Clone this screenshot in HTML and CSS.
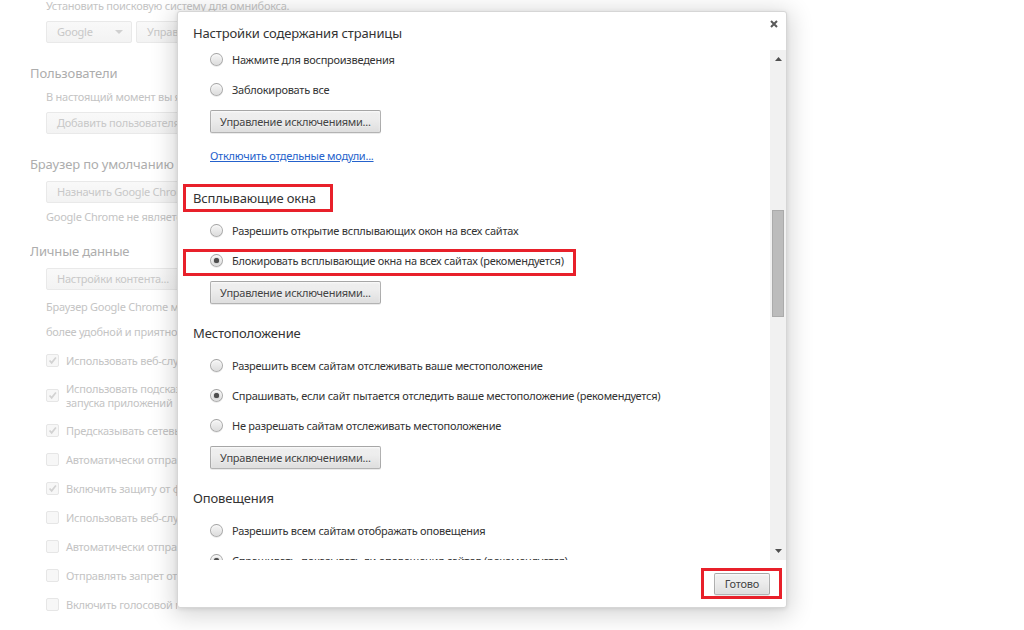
FILE: index.html
```html
<!DOCTYPE html>
<html lang="ru">
<head>
<meta charset="utf-8">
<title>Настройки содержания страницы</title>
<link rel="stylesheet" href="styles.css">
</head>
<body>

<!-- страница настроек под диалогом -->
<div class="page">
  <p class="bg-note first">Установить поисковую систему для омнибокса.</p>
  <div class="bg-clip">
    <div class="bg-row">
      <span class="bg-select">Google <i class="caret"></i></span>
      <span class="bg-btn">Управление поисковыми системами...</span>
    </div>

    <h3 class="bg-head">Пользователи</h3>
    <p class="bg-note">В настоящий момент вы являетесь единственным пользователем Google Chrome.</p>
    <div class="bg-row"><span class="bg-btn">Добавить пользователя...</span></div>

    <h3 class="bg-head">Браузер по умолчанию</h3>
    <div class="bg-row"><span class="bg-btn">Назначить Google Chrome браузером по умолчанию</span></div>
    <p class="bg-note">Google Chrome не является браузером по умолчанию.</p>

    <h3 class="bg-head after-note">Личные данные</h3>
    <div class="bg-row"><span class="bg-btn">Настройки контента...</span><span class="bg-btn">Очистить историю...</span></div>
    <p class="bg-note wide">Браузер Google Chrome может использовать веб-службы, чтобы сделать работу в Интернете</p>
    <p class="bg-note wide">более удобной и приятной. Эти службы можно отключить.</p>

    <div class="bg-checks">
      <div class="bg-check"><span class="box on"><svg viewBox="0 0 13 13"><path d="M3 6.5l2.5 2.8L10.5 3"/></svg></span>Использовать веб-службу для разрешения проблем, связанных с навигацией</div>
      <div class="bg-check two"><span class="box on"><svg viewBox="0 0 13 13"><path d="M3 6.5l2.5 2.8L10.5 3"/></svg></span><span>Использовать подсказки для завершения поисковых запросов и URL<br>запуска приложений</span></div>
      <div class="bg-check"><span class="box on"><svg viewBox="0 0 13 13"><path d="M3 6.5l2.5 2.8L10.5 3"/></svg></span>Предсказывать сетевые действия для ускорения загрузки страниц</div>
      <div class="bg-check"><span class="box"></span>Автоматически отправлять в Google информацию о возможных инцидентах</div>
      <div class="bg-check"><span class="box on"><svg viewBox="0 0 13 13"><path d="M3 6.5l2.5 2.8L10.5 3"/></svg></span>Включить защиту от фишинга и вредоносного ПО</div>
      <div class="bg-check"><span class="box"></span>Использовать веб-службу для проверки правописания</div>
      <div class="bg-check"><span class="box"></span>Автоматически отправлять в Google статистику использования</div>
      <div class="bg-check"><span class="box"></span>Отправлять запрет отслеживания с исходящим трафиком</div>
      <div class="bg-check"><span class="box"></span>Включить голосовой поиск по команде «Окей, Google»</div>
    </div>
  </div>
</div>

<!-- диалог -->
<div class="dialog">
  <div class="dlg-head">
    <h1 class="dlg-title">Настройки содержания страницы</h1>
    <span class="close"><svg width="8" height="8" viewBox="0 0 8 8"><path d="M1 1L7 7M7 1L1 7"/></svg></span>
  </div>

  <div class="dlg-body">
    <div class="scroll">
      <div class="scroll-inner">
        <div class="opts first">
          <div class="radio-row"><span class="radio"></span>Нажмите для воспроизведения</div>
          <div class="radio-row"><span class="radio"></span>Заблокировать все</div>
          <div class="btn-row"><span class="btn">Управление исключениями...</span></div>
          <div class="link-row"><a class="link">Отключить отдельные модули...</a></div>
        </div>

        <h4 class="sec-head"><span class="mark">Всплывающие окна</span></h4>
        <div class="opts">
          <div class="radio-row"><span class="radio"></span>Разрешить открытие всплывающих окон на всех сайтах</div>
          <div class="radio-row marked"><span class="radio on"></span>Блокировать всплывающие окна на всех сайтах (рекомендуется)</div>
          <div class="btn-row"><span class="btn">Управление исключениями...</span></div>
        </div>

        <h4 class="sec-head">Местоположение</h4>
        <div class="opts">
          <div class="radio-row"><span class="radio"></span>Разрешить всем сайтам отслеживать ваше местоположение</div>
          <div class="radio-row"><span class="radio on"></span>Спрашивать, если сайт пытается отследить ваше местоположение (рекомендуется)</div>
          <div class="radio-row"><span class="radio"></span>Не разрешать сайтам отслеживать местоположение</div>
          <div class="btn-row"><span class="btn">Управление исключениями...</span></div>
        </div>

        <h4 class="sec-head">Оповещения</h4>
        <div class="opts">
          <div class="radio-row"><span class="radio"></span>Разрешить всем сайтам отображать оповещения</div>
          <div class="radio-row"><span class="radio on"></span>Спрашивать, показывать ли оповещения сайтов (рекомендуется)</div>
          <div class="radio-row"><span class="radio"></span>Не показывать оповещения на сайтах</div>
        </div>
      </div>
    </div>

    <div class="scrollbar">
      <span class="arrow"><svg width="7" height="4" viewBox="0 0 7 4"><path d="M0 4L3.5 0L7 4Z"/></svg></span>
      <div class="track"><div class="thumb"></div></div>
      <span class="arrow"><svg width="7" height="4" viewBox="0 0 7 4"><path d="M0 0L7 0L3.5 4Z"/></svg></span>
    </div>
  </div>

  <div class="dlg-foot">
    <span class="mark-btn"><span class="btn">Готово</span></span>
  </div>
</div>

</body>
</html>
```

FILE: styles.css
```css
* {
	margin: 0;
	padding: 0;
	box-sizing: border-box;
}
body {
	width: 1024px;
	height: 630px;
	overflow: hidden;
	position: relative;
	background: #fff;
	font-family: "Noto Sans", "Open Sans", sans-serif;
	font-size: 11px;
	letter-spacing: -0.25px;
	color: #333;
}

/* страница под диалогом */
.page {
	width: 700px;
	padding-left: 30px;
	white-space: nowrap;
	color: #c4c4c4;
}
.bg-clip {
	width: 147px;
	overflow: hidden;
}
.bg-note {
	line-height: 16px;
	padding-left: 16px;
	margin-top: 6px;
}
.bg-note.first { margin-top: -2px; }
.bg-note.wide { margin-top: 9px; }
.bg-row {
	display: flex;
	gap: 4px;
	height: 22px;
	padding-left: 16px;
	margin-top: 7px;
}
.bg-btn, .bg-select {
	flex: none;
	height: 22px;
	line-height: 20px;
	padding: 0 10px;
	border: 1px solid #e9e9e9;
	border-radius: 2px;
	background: linear-gradient(#f9f9f9, #f3f3f3);
	color: #c8c8c8;
}
.bg-select {
	width: 86px;
	display: flex;
	align-items: center;
	justify-content: space-between;
	padding: 0 8px 0 10px;
}
.caret {
	border: 4px solid transparent;
	border-top-color: #d0d0d0;
	margin-top: 4px;
}
.bg-head {
	font-size: 13px;
	letter-spacing: -0.15px;
	font-weight: normal;
	line-height: 20px;
	color: #adadad;
	margin-top: 20px;
}
.bg-head.after-note { margin-top: 16px; }
.bg-checks { margin-top: 6px; }
.bg-check {
	display: flex;
	align-items: center;
	gap: 7px;
	height: 29px;
	padding-left: 16px;
}
.bg-check.two {
	height: 41px;
	line-height: 14px;
}
.box {
	width: 13px;
	height: 13px;
	border: 1px solid #e6e6e6;
	border-radius: 2px;
	background: #f7f7f7;
	flex: none;
}
.box svg {
	display: block;
	width: 11px;
	height: 11px;
	fill: none;
	stroke: #d2d2d2;
	stroke-width: 2;
}

/* диалог */
.dialog {
	position: absolute;
	left: 177px;
	top: 11px;
	width: 610px;
	height: 597px;
	display: flex;
	flex-direction: column;
	background: #fff;
	border: 1px solid #d6d6d6;
	border-radius: 3px;
	box-shadow: 0 4px 23px 4px rgba(0, 0, 0, 0.16), 0 1px 4px rgba(0, 0, 0, 0.1);
}
.dlg-head {
	height: 38px;
	padding: 11px 15px 0;
	flex: none;
}
.dlg-title {
	font-size: 13px;
	letter-spacing: -0.15px;
	font-weight: normal;
	line-height: 20px;
	color: #333;
}
.close {
	position: absolute;
	right: 8px;
	top: 8px;
	line-height: 0;
}
.close svg {
	stroke: #5a5a5a;
	stroke-width: 2;
}
.dlg-body {
	flex: 1;
	display: flex;
	min-height: 0;
}
.scroll {
	flex: 1;
	overflow: hidden;
	white-space: nowrap;
}
.scroll-inner {
	margin-top: -6px;
	padding-left: 15px;
}
.opts {
	padding-left: 17px;
	margin-top: 7px;
}
.opts.first { margin-top: 0; }
.radio-row {
	display: flex;
	align-items: center;
	gap: 9px;
	height: 30px;
}
.radio-row.marked {
	width: max-content;
	height: 27px;
	margin: 4px 0 -1px -27px;
	padding: 0 9px 5px 24px;
	border: 3px solid #e8202a;
}
.radio {
	position: relative;
	width: 13px;
	height: 13px;
	flex: none;
	border: 1px solid rgba(0, 0, 0, 0.27);
	border-radius: 50%;
	background: linear-gradient(#f1f1f1, #ececec 38%, #dcdcdc);
	box-shadow: 0 1px 0 rgba(0, 0, 0, 0.07), inset 0 1px 2px rgba(255, 255, 255, 0.8);
}
.radio.on::after {
	content: "";
	position: absolute;
	left: 3px;
	top: 3px;
	width: 5px;
	height: 5px;
	border-radius: 50%;
	background: #4e4e4e;
	box-shadow: 0 0 1px #4e4e4e;
}
.btn-row {
	display: flex;
	margin-top: 6px;
}
.btn {
	display: inline-block;
	height: 23px;
	line-height: 21px;
	padding: 0 9px;
	border: 1px solid rgba(0, 0, 0, 0.25);
	border-radius: 2px;
	background: linear-gradient(#efefef, #ededed 38%, #dedede);
	box-shadow: 0 1px 0 rgba(0, 0, 0, 0.08), inset 0 1px 2px rgba(255, 255, 255, 0.75);
	color: #444;
	text-shadow: 0 1px 0 #f0f0f0;
}
.link-row {
	line-height: 16px;
	padding: 15px 0 5px;
}
.link {
	color: #2562cc;
	text-decoration: underline;
}
.sec-head {
	display: flex;
	height: 20px;
	margin-top: 19px;
	font-size: 13px;
	letter-spacing: -0.15px;
	font-weight: normal;
	line-height: 20px;
	color: #333;
}
.mark {
	margin: -4px 0 -4px -10px;
	padding: 1px 14px 1px 7px;
	border: 3px solid #e8202a;
}

/* полоса прокрутки */
.scrollbar {
	width: 16px;
	flex: none;
	display: flex;
	flex-direction: column;
	background: #f1f1f1;
}
.arrow {
	height: 18px;
	display: flex;
	align-items: center;
	justify-content: center;
	flex: none;
}
.arrow svg { fill: #505050; }
.track { flex: 1; }
.thumb {
	width: 12px;
	height: 107px;
	margin: 142px 0 0 2px;
	background: #bcbcbc;
	border: 1px solid #ababab;
}

.dlg-foot {
	height: 47px;
	flex: none;
	display: flex;
	align-items: center;
	justify-content: flex-end;
	padding-right: 4px;
}
.mark-btn {
	display: flex;
	padding: 2px 9px 1px 10px;
	border: 3px solid #e8202a;
}
.mark-btn .btn {
	height: 22px;
	line-height: 20px;
	padding: 0 10px;
}
```
